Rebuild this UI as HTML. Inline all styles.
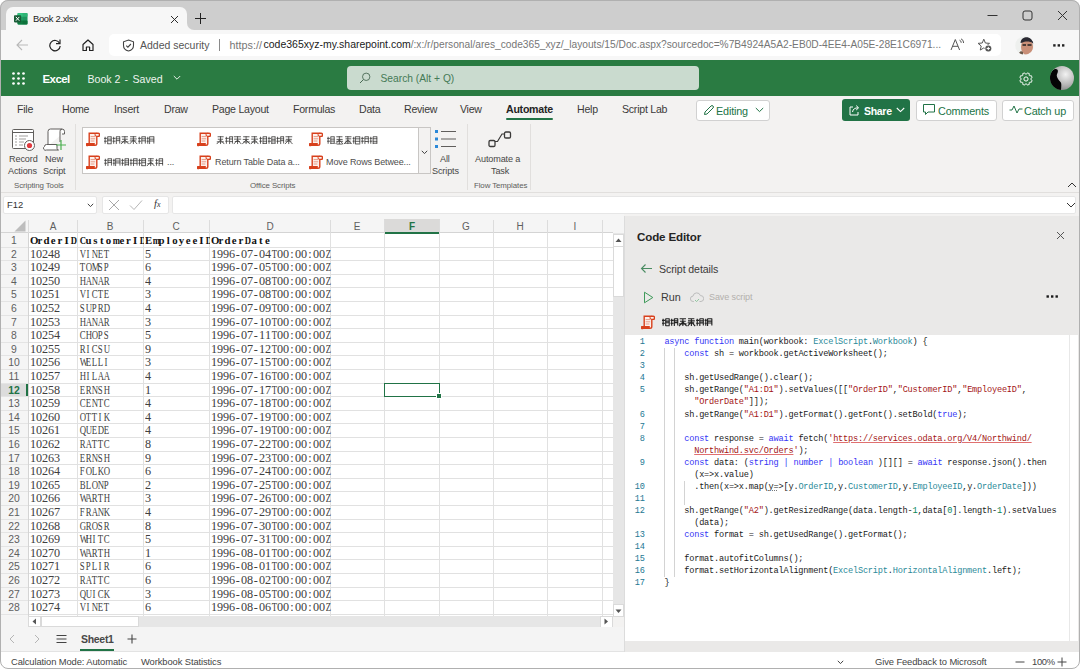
<!DOCTYPE html>
<html><head><meta charset="utf-8">
<style>
*{box-sizing:border-box;margin:0;padding:0}
html,body{width:1080px;height:669px;overflow:hidden;background:#fff}
body{font-family:"Liberation Sans",sans-serif;position:relative;color:#242424}
.a{position:absolute;white-space:nowrap}
#win{position:absolute;left:0;top:0;width:1080px;height:669px;background:#f3f2f1;border-radius:8px;overflow:hidden}
#frame{position:absolute;left:0;top:0;width:1080px;height:669px;border:1px solid #b0b0b0;border-radius:8px;pointer-events:none}
/* tab strip */
#tabs{position:absolute;left:0;top:0;width:1080px;height:31px;background:#cecece}
#tab{position:absolute;left:6px;top:7px;width:181px;height:24px;background:#f7f7f7;border-radius:7px 7px 0 0}
#toolbar{position:absolute;left:0;top:30px;width:1080px;height:31px;background:#f7f7f7}
#addr{position:absolute;left:109px;top:34px;width:892px;height:22px;background:#fff;border-radius:5px}
#green{position:absolute;left:0;top:60px;width:1080px;height:36px;background:#2a7b42}
#search{position:absolute;left:347px;top:66px;width:352px;height:24px;background:#cadbcf;border-radius:4px}
#rtabs{position:absolute;left:0;top:96px;width:1080px;height:27px;background:#f3f2f1}
#rbody{position:absolute;left:0;top:123px;width:1080px;height:70px;background:#f3f2f1;border-bottom:1px solid #e1dfdd}
.rt{font-size:10.6px;letter-spacing:-0.25px;color:#3b3a39;top:103px}
.btn{position:absolute;top:100px;height:21px;border:1px solid #d1d1d1;border-radius:3px;background:#fff}
.rl{font-size:9.1px;color:#484746;letter-spacing:-0.12px}
.gl{font-size:7.9px;color:#605e5c;letter-spacing:-0.1px}
.gi{font-size:9px;color:#4f4e4d;letter-spacing:-0.12px}
.cjk{height:10px;background:repeating-linear-gradient(90deg,#555 0 1px,transparent 1px 2.2px,#555 2.2px 3px,transparent 3px 4.5px,#777 4.5px 5.5px,transparent 5.5px 7px,#666 7px 8px,transparent 8px 9px);opacity:.75}
.ch{font-size:10px;color:#5f5f5f}
.rh{font-size:10.4px;color:#5f5f5f;text-align:center;line-height:13px}
.cc{font-family:"Liberation Serif",serif;font-size:12.2px;line-height:14px;color:#404040}
.cc i,.cb i{display:inline-block;font-style:normal;text-align:center;width:6px}
.cb{font-family:"Liberation Serif",serif;font-size:10.8px;line-height:14px;font-weight:bold;color:#111}
.cb i{width:6.67px}
.cc i.w{transform:scaleX(.72)}
.cb i.w{transform:scaleX(.8)}
.sb{font-size:9.4px;color:#444;letter-spacing:-0.1px}
.ln{font-family:"Liberation Mono",monospace;font-size:8.6px;color:#237893;left:600px;width:45px;text-align:right;line-height:12px}
.cd{font-family:"Liberation Mono",monospace;font-size:8.6px;letter-spacing:-0.195px;color:#1a1a1a;left:664.4px;line-height:12px;white-space:pre}
.k{color:#3535f5}.t{color:#2b8a99}.s{color:#a31515}.n{color:#098658}.h{text-decoration:underline dotted #777;text-underline-offset:1px}.u{color:#a31515;text-decoration:underline;text-decoration-color:#e07070}
</style></head><body>
<div id="win">
 <div id="tabs"></div>
 <div id="tab"></div>
 <div class="a" style="left:187px;top:23px;width:7px;height:8px;background:#f7f7f7"></div>
 <div class="a" style="left:187px;top:22px;width:7px;height:8px;background:#cecece;border-bottom-left-radius:7px"></div>
 <svg class="a" style="left:14px;top:12.5px" width="14" height="12" viewBox="0 0 14 12">
  <rect x="3.5" y="0" width="10" height="11.5" rx="1" fill="#21a366"/>
  <rect x="3.5" y="0" width="10" height="3.8" rx="1" fill="#33c481"/>
  <rect x="3.5" y="7.6" width="10" height="3.9" rx="1" fill="#107c41"/>
  <rect x="8.5" y="0" width="5" height="11.5" fill="#000" opacity=".08"/>
  <rect x="0" y="2.2" width="7.2" height="7.2" rx="0.8" fill="#185c37"/>
  <path d="M1.9 3.9L5.3 7.7M5.3 3.9L1.9 7.7" stroke="#fff" stroke-width="1"/>
 </svg>
 <div class="a" style="left:33px;top:13px;font-size:9.4px;letter-spacing:-0.3px;color:#1b1b1b">Book 2.xlsx</div>
 <svg class="a" style="left:170px;top:15px" width="9" height="9" viewBox="0 0 9 9"><path d="M1 1L8 8M8 1L1 8" stroke="#222" stroke-width="0.95"/></svg>
 <svg class="a" style="left:194px;top:12px" width="12" height="12" viewBox="0 0 12 12"><path d="M6.5 1V12M1 6.5H12" stroke="#222" stroke-width="1"/></svg>
 <svg class="a" style="left:987px;top:14px" width="11" height="3"><path d="M0.5 1.5H10.5" stroke="#333" stroke-width="1"/></svg>
 <svg class="a" style="left:1022px;top:10px" width="11" height="11"><rect x="1" y="1" width="9" height="9" rx="2" fill="none" stroke="#333" stroke-width="1"/></svg>
 <svg class="a" style="left:1057px;top:10px" width="11" height="11"><path d="M1 1L10 10M10 1L1 10" stroke="#333" stroke-width="1"/></svg>

 <div id="toolbar"></div>
 <svg class="a" style="left:15px;top:38px" width="14" height="14" viewBox="0 0 14 14"><path d="M13 7H2M7 2L2 7L7 12" stroke="#b9b9b9" stroke-width="1.1" fill="none"/></svg>
 <svg class="a" style="left:48px;top:38px" width="14" height="14" viewBox="0 0 14 14"><path d="M11.6 5.2A5.2 5.2 0 1 0 12.2 8" stroke="#222" stroke-width="1.2" fill="none"/><path d="M12 1.6V5.6H8" stroke="#222" stroke-width="1.2" fill="none"/></svg>
 <svg class="a" style="left:81px;top:38px" width="14" height="14" viewBox="0 0 14 14"><path d="M2 6.5L7 2L12 6.5V12.5H8.6V9H5.4V12.5H2Z" stroke="#222" stroke-width="1.2" fill="none" stroke-linejoin="round"/></svg>
 <div id="addr"></div>
 <svg class="a" style="left:122px;top:39px" width="13" height="13" viewBox="0 0 13 13"><path d="M6.5 1L11.5 2.8V6.5C11.5 9.3 9.2 11.3 6.5 12C3.8 11.3 1.5 9.3 1.5 6.5V2.8Z" stroke="#444" stroke-width="1.1" fill="none"/><path d="M4.2 6.6L5.9 8.2L8.9 5" stroke="#444" stroke-width="1.1" fill="none"/></svg>
 <div class="a" style="left:140px;top:39px;font-size:10.5px;color:#555">Added security</div>
 <div class="a" style="left:219px;top:39px;width:1px;height:12px;background:#8a8a8a"></div>
 <div class="a" id="u1" style="left:229.5px;top:39px;font-size:10.8px;color:#767676">https://</div>
 <div class="a" id="u2" style="left:263.5px;top:39px;font-size:10.49px;color:#1b1b1b">code365xyz-my.sharepoint.com</div>
 <div class="a" id="u3" style="left:410.7px;top:39px;font-size:10.2px;color:#767676">/:x:/r/personal/ares_code365_xyz/_layouts/15/Doc.aspx?sourcedoc=%7B4924A5A2-EB0D-4EE4-A05E-28E1C6971...</div>
 <svg class="a" style="left:950px;top:38px" width="15" height="13" viewBox="0 0 15 13"><path d="M1 12L5.3 1.5L9.6 12M2.6 8.3H8" stroke="#555" stroke-width="1" fill="none"/><path d="M9.5 2.2A2.5 2.5 0 0 1 11.2 4.8M11 0.8A4.3 4.3 0 0 1 13.6 5" stroke="#555" stroke-width="1" fill="none"/></svg>
 <svg class="a" style="left:977px;top:38px" width="15" height="14" viewBox="0 0 15 14"><path d="M6.80 1.20L8.39 5.02L12.51 5.35L9.37 8.03L10.33 12.05L6.80 9.90L3.27 12.05L4.23 8.03L1.09 5.35L5.21 5.02Z" stroke="#555" stroke-width="1" fill="none" stroke-linejoin="round"/><circle cx="11.3" cy="10.5" r="3.7" fill="#f7f7f7"/><circle cx="11.3" cy="10.5" r="3" fill="#555"/><path d="M11.3 8.9V12.1M9.7 10.5H12.9" stroke="#fff" stroke-width="1"/></svg>
 <svg class="a" style="left:1015px;top:36px" width="19" height="19" viewBox="0 0 19 19"><defs><clipPath id="avc"><circle cx="9.5" cy="9.5" r="9.3"/></clipPath></defs><g clip-path="url(#avc)"><rect width="19" height="19" fill="#eef0ee"/><ellipse cx="12" cy="11" rx="6" ry="8" fill="#c98f78"/><path d="M5.5 7C6 2.5 9 1 12.5 1.2C16 1.4 18.5 4 18.3 8L17.5 7C15 5 10 5 7 6.8Z" fill="#2b2a33"/><path d="M7.5 9H11M12.5 9H16.5" stroke="#222" stroke-width="1.6"/><path d="M4 17C5 15 7 15 8 16L8 19H4Z" fill="#6b5a4a"/></g></svg>
 <svg class="a" style="left:1053px;top:44px" width="12" height="3"><rect x="0.2" y="0.2" width="2.4" height="2.4" fill="#222"/><rect x="4.6" y="0.2" width="2.4" height="2.4" fill="#222"/><rect x="9" y="0.2" width="2.4" height="2.4" fill="#222"/></svg>

 <div id="green"></div>
 <svg class="a" style="left:12px;top:72px" width="13" height="13" viewBox="0 0 13 13" fill="#fff"><circle cx="1.5" cy="1.5" r="1.35"/><circle cx="6.5" cy="1.5" r="1.35"/><circle cx="11.5" cy="1.5" r="1.35"/><circle cx="1.5" cy="6.5" r="1.35"/><circle cx="6.5" cy="6.5" r="1.35"/><circle cx="11.5" cy="6.5" r="1.35"/><circle cx="1.5" cy="11.5" r="1.35"/><circle cx="6.5" cy="11.5" r="1.35"/><circle cx="11.5" cy="11.5" r="1.35"/></svg>
 <div class="a" style="left:42.5px;top:72.5px;font-size:11.4px;letter-spacing:-0.5px;color:#fff;font-weight:bold">Excel</div>
 <div class="a" style="left:87.5px;top:72.5px;font-size:10.6px;color:#eef4ef">Book 2</div><div class="a" style="left:124.5px;top:72.5px;font-size:10.6px;color:#eef4ef">-</div><div class="a" style="left:132.5px;top:72.5px;font-size:10.6px;color:#eef4ef">Saved</div>
 <svg class="a" style="left:173px;top:75px" width="8" height="6"><path d="M0.8 1L4 4.2L7.2 1" stroke="#e6efe8" stroke-width="1" fill="none"/></svg>
 <div id="search"></div>
 <svg class="a" style="left:359px;top:72px" width="12" height="12" viewBox="0 0 12 12"><circle cx="7.2" cy="4.8" r="3.7" stroke="#4a6a55" stroke-width="0.9" fill="none"/><path d="M4.5 7.5L1 11" stroke="#4a6a55" stroke-width="1"/></svg>
 <div class="a" style="left:380.5px;top:73px;font-size:10.25px;color:#457a56">Search (Alt + Q)</div>
 <svg class="a" style="left:1018.5px;top:71.5px" width="14" height="14" viewBox="0 0 14 14"><circle cx="7" cy="7" r="2.1" stroke="#fff" stroke-width="1" fill="none"/><path d="M11.87 7.55L13.14 8.39L12.33 10.36L10.83 10.05L10.05 10.83L10.36 12.33L8.39 13.14L7.55 11.87L6.45 11.87L5.61 13.14L3.64 12.33L3.95 10.83L3.17 10.05L1.67 10.36L0.86 8.39L2.13 7.55L2.13 6.45L0.86 5.61L1.67 3.64L3.17 3.95L3.95 3.17L3.64 1.67L5.61 0.86L6.45 2.13L7.55 2.13L8.39 0.86L10.36 1.67L10.05 3.17L10.83 3.95L12.33 3.64L13.14 5.61L11.87 6.45Z" stroke="#fff" stroke-width="0.9" fill="none" stroke-linejoin="round"/></svg>
 <svg class="a" style="left:1050px;top:66px" width="24" height="24" viewBox="0 0 24 24"><defs><clipPath id="av2"><circle cx="12" cy="12" r="12"/></clipPath><radialGradient id="avg" cx="0.65" cy="0.35" r="0.7"><stop offset="0" stop-color="#f2f2f2"/><stop offset="0.6" stop-color="#b9b9b9"/><stop offset="1" stop-color="#8a8a8a"/></radialGradient></defs><g clip-path="url(#av2)"><rect width="24" height="24" fill="url(#avg)"/><path d="M0 8C2 5 3.5 3.5 5 3C7 2.6 8.3 3.8 7.8 6C7.5 7.5 6.5 8.5 6.8 10C7.2 12 8.5 14 10.5 16C11.5 17 11.5 19 11 24H0Z" fill="#050505"/></g></svg>
 <div id="rtabs"></div>
 <div class="a rt" style="left:17px">File</div>
 <div class="a rt" style="left:62px">Home</div>
 <div class="a rt" style="left:114px">Insert</div>
 <div class="a rt" style="left:164px">Draw</div>
 <div class="a rt" style="left:212px">Page Layout</div>
 <div class="a rt" style="left:293px">Formulas</div>
 <div class="a rt" style="left:359px">Data</div>
 <div class="a rt" style="left:404px">Review</div>
 <div class="a rt" style="left:460px">View</div>
 <div class="a rt" style="left:506px;font-weight:bold;color:#242424">Automate</div>
 <div class="a" style="left:506px;top:117.5px;width:47px;height:2.5px;border-radius:1.5px;background:#217346"></div>
 <div class="a rt" style="left:577px">Help</div>
 <div class="a rt" style="left:622px">Script Lab</div>
 <div class="btn" style="left:696px;width:74px"></div>
 <svg class="a" style="left:703px;top:104px" width="11" height="12" viewBox="0 0 11 12"><path d="M1.5 10.5L2 8L8 2A1.4 1.4 0 0 1 10 4L4 10Z" stroke="#217346" stroke-width="1" fill="none" stroke-linejoin="round"/></svg>
 <div class="a" style="left:716px;top:105px;font-size:10.8px;letter-spacing:-0.15px;color:#217346">Editing</div>
 <svg class="a" style="left:755px;top:107px" width="9" height="6"><path d="M0.8 1L4.5 4.6L8.2 1" stroke="#217346" stroke-width="1" fill="none"/></svg>
 <div class="a" style="left:842px;top:99px;width:68px;height:22px;border-radius:3px;background:#217346"></div>
 <svg class="a" style="left:848px;top:103px" width="13" height="13" viewBox="0 0 13 13"><path d="M5 4H2V12H10V9" stroke="#fff" stroke-width="1" fill="none"/><path d="M4.5 9C5 6 7 4.8 10 4.8M8.2 2.6L10.6 4.8L8.2 7" stroke="#fff" stroke-width="1" fill="none"/></svg>
 <div class="a" style="left:864px;top:105px;font-size:10.5px;letter-spacing:-0.3px;font-weight:bold;color:#fff">Share</div>
 <svg class="a" style="left:896px;top:107px" width="9" height="6"><path d="M0.8 1L4.5 4.6L8.2 1" stroke="#fff" stroke-width="1.1" fill="none"/></svg>
 <div class="btn" style="left:916px;width:81px"></div>
 <svg class="a" style="left:922px;top:103px" width="14" height="13" viewBox="0 0 14 13"><path d="M1.5 1.5H12.5V9H6L3.5 11.5V9H1.5Z" stroke="#217346" stroke-width="1" fill="none" stroke-linejoin="round"/></svg>
 <div class="a" style="left:938px;top:105px;font-size:10.8px;letter-spacing:-0.15px;color:#217346">Comments</div>
 <div class="btn" style="left:1002px;width:72px"></div>
 <svg class="a" style="left:1009px;top:104px" width="14" height="11" viewBox="0 0 14 11"><path d="M0.5 6H3L5 2L8 9L10 5H13.5" stroke="#217346" stroke-width="1" fill="none"/></svg>
 <div class="a" style="left:1024px;top:105px;font-size:10.8px;letter-spacing:-0.15px;color:#217346">Catch up</div>
 <div id="rbody"></div>
 <svg class="a" style="left:11px;top:128px" width="24" height="23" viewBox="0 0 24 23">
  <rect x="1.5" y="1.5" width="21" height="19" rx="1" fill="#fff" stroke="#605e5c" stroke-width="1"/>
  <path d="M1.5 4.5H22.5" stroke="#605e5c" stroke-width="1"/>
  <path d="M4 8H6M8 8H17M4 11H6M8 11H15M4 14H6M8 14H13M4 17H6M8 17H12" stroke="#a19f9d" stroke-width="1"/>
  <circle cx="18.5" cy="17.5" r="5" fill="#fff" stroke="#605e5c" stroke-width="1"/>
  <circle cx="18.5" cy="17.5" r="2.6" fill="#e03a3e"/>
 </svg>
 <div class="a rl" style="left:9px;top:154px">Record</div>
 <div class="a rl" style="left:8px;top:166px">Actions</div>
 <svg class="a" style="left:43px;top:128px" width="25" height="23" viewBox="0 0 25 23">
  <path d="M5 18V3.5A2.5 2.5 0 0 1 7.5 1H19A2.5 2.5 0 0 1 21.5 3.5V6H19M19 1.2A2 2 0 0 0 17 3.5V14" fill="#fff" stroke="#605e5c" stroke-width="1"/>
  <path d="M1.5 18.5A2 2 0 0 1 3.5 16.5H14V20.5A1.5 1.5 0 0 0 15.5 22H3.5A2 2 0 0 1 1.5 18.5Z" fill="#fff" stroke="#605e5c" stroke-width="1"/>
  <path d="M18 12V22M13 17H23" stroke="#4caf50" stroke-width="1.2"/>
 </svg>
 <div class="a rl" style="left:45px;top:154px">New</div>
 <div class="a rl" style="left:43px;top:166px">Script</div>
 <div class="a gl" style="left:14px;top:181px">Scripting Tools</div>
 <div class="a" style="left:75px;top:124px;width:1px;height:66px;background:#e1dfdd"></div>

 <div class="a" style="left:82px;top:127px;width:349px;height:47px;background:#fff;border:1px solid #c8c6c4"></div>
 <div class="a" style="left:418px;top:128px;width:12px;height:45px;background:#f3f2f1;border-left:1px solid #c8c6c4"></div>
 <svg class="a" style="left:421px;top:150px" width="7" height="5"><path d="M0.8 0.8L3.5 3.6L6.2 0.8" stroke="#444" stroke-width="1" fill="none"/></svg>
 <svg width="0" height="0" style="position:absolute"><defs>
  <g id="scr"><path d="M3.2 1.2H12A1.6 1.6 0 0 1 12 4.4H10.8V11.6A1.8 1.8 0 0 1 9 13.4H3.2Z" fill="#fdf1ec" stroke="#d8401c" stroke-width="1.4"/><path d="M10.6 1.2A1.6 1.6 0 0 0 10.6 4.4" fill="none" stroke="#d8401c" stroke-width="1"/><path d="M0.6 11H8.8V14H2.4A1.8 1.5 0 0 1 0.6 11Z" fill="#d8401c"/><path d="M4.6 4.6H9.2M4.6 6.8H9.2M4.6 9H8.4" stroke="#e79a86" stroke-width="1"/></g>
 </defs></svg>
 <svg class="a" style="left:86px;top:132px" width="14" height="15"><use href="#scr"/></svg>
 <svg class="a" style="left:86px;top:155px" width="14" height="15"><use href="#scr"/></svg>
 <svg class="a" style="left:197px;top:132px" width="14" height="15"><use href="#scr"/></svg>
 <svg class="a" style="left:197px;top:155px" width="14" height="15"><use href="#scr"/></svg>
 <svg class="a" style="left:309px;top:132px" width="14" height="15"><use href="#scr"/></svg>
 <svg class="a" style="left:309px;top:155px" width="14" height="15"><use href="#scr"/></svg>
<svg class="a" style="left:102px;top:135.5px" width="55" height="9" viewBox="0 0 55.0 9.5"><path d="M1.8 0.8V8.2M0.6 2.5H3.7M0.6 5.5H3.7M4.3 0.8H8.6M4.3 3.3H8.6M4.3 5.0H8.6M4.3 8.2H8.6M4.5 0.8V8.5M8.2 0.8V8.0M10.8 0.8V8.2M9.6 2.5H12.8M9.6 5.5H12.8M13.4 0.8H17.6M13.4 3.0H17.6M13.4 4.9H17.6M13.6 0.8V8.5M17.2 0.8V8.0M19.2 0.8H25.9M19.6 3.4H25.7M18.7 6.2H26.5M22.6 0.3V8.5M22.6 4.2L18.6 8.5M22.6 4.2L26.6 8.5M28.1 0.8H34.7M28.0 3.1H35.2M27.7 5.2H34.6M31.6 0.3V8.5M31.6 4.2L27.6 8.5M31.6 4.2L35.6 8.5M37.8 0.8V8.2M36.6 2.5H39.7M36.6 5.5H39.7M40.3 0.8H44.6M40.3 3.0H44.6M40.3 5.1H44.6M40.5 0.8V8.5M44.2 0.8V8.0M46.8 0.8V8.2M45.6 2.5H47.9M45.6 5.5H47.9M48.5 0.8H53.6M48.5 3.3H53.6M48.5 5.3H53.6M48.7 0.8V8.5M53.2 0.8V8.0" stroke="#3a3938" stroke-width="0.85" fill="none"/></svg>
<svg class="a" style="left:213.5px;top:135.5px" width="82" height="9" viewBox="0 0 82.0 9.5"><path d="M1.5 0.8H7.9M1.7 3.4H7.3M0.7 6.2H8.2M4.6 0.3V8.5M4.6 4.2L0.6 8.5M4.6 4.2L8.6 8.5M10.8 0.8V8.2M9.6 2.5H13.4M9.6 5.5H13.4M14.0 0.8H17.6M14.0 3.2H17.6M14.0 5.9H17.6M14.2 0.8V8.5M17.2 0.8V8.0M18.6 0.8H26.2M18.9 3.3H26.4M19.7 5.8H25.1M22.6 0.3V8.5M22.6 4.2L18.6 8.5M22.6 4.2L26.6 8.5M28.5 0.8H35.2M28.1 3.6H34.4M28.6 6.3H35.4M31.6 0.3V8.5M31.6 4.2L27.6 8.5M31.6 4.2L35.6 8.5M37.1 0.8H43.2M37.0 3.3H44.2M37.2 6.3H43.2M40.6 0.3V8.5M40.6 4.2L36.6 8.5M40.6 4.2L44.6 8.5M46.8 0.8V8.2M45.6 2.5H48.7M45.6 5.5H48.7M49.3 0.8H53.6M49.3 3.0H53.6M49.3 5.5H53.6M49.3 7.8H53.6M49.5 0.8V8.5M53.2 0.8V8.0M55.8 0.8V8.2M54.6 2.5H57.9M54.6 5.5H57.9M58.5 0.8H62.6M58.5 3.4H62.6M58.5 5.2H62.6M58.5 7.6H62.6M58.7 0.8V8.5M62.2 0.8V8.0M64.8 0.8V8.2M63.6 2.5H67.3M63.6 5.5H67.3M67.9 0.8H71.6M67.9 3.0H71.6M67.9 4.9H71.6M68.1 0.8V8.5M71.2 0.8V8.0M73.2 0.8H80.3M73.5 3.5H79.9M72.8 5.3H79.4M76.6 0.3V8.5M76.6 4.2L72.6 8.5M76.6 4.2L80.6 8.5" stroke="#3a3938" stroke-width="0.85" fill="none"/></svg>
<svg class="a" style="left:324.5px;top:135.5px" width="55" height="9" viewBox="0 0 55.0 9.5"><path d="M1.8 0.8V8.2M0.6 2.5H3.8M0.6 5.5H3.8M4.4 0.8H8.6M4.4 3.3H8.6M4.4 5.4H8.6M4.4 7.7H8.6M4.6 0.8V8.5M8.2 0.8V8.0M10.4 0.8H16.9M10.6 3.6H17.1M10.3 5.6H17.5M10.7 8.5H17.0M13.6 0.3V8.5M13.6 4.2L9.6 8.5M13.6 4.2L17.6 8.5M19.6 0.8H26.4M20.1 3.0H26.2M19.9 5.5H25.5M19.1 7.6H26.2M22.6 0.3V8.5M22.6 4.2L18.6 8.5M22.6 4.2L26.6 8.5M28.8 0.8V8.2M27.6 2.5H29.8M27.6 5.5H29.8M30.4 0.8H35.6M30.4 3.0H35.6M30.4 5.6H35.6M30.4 8.4H35.6M30.6 0.8V8.5M35.2 0.8V8.0M37.8 0.8V8.2M36.6 2.5H39.8M36.6 5.5H39.8M40.4 0.8H44.6M40.4 2.9H44.6M40.4 5.8H44.6M40.6 0.8V8.5M44.2 0.8V8.0M46.8 0.8V8.2M45.6 2.5H48.5M45.6 5.5H48.5M49.1 0.8H53.6M49.1 2.9H53.6M49.1 5.6H53.6M49.1 7.6H53.6M49.3 0.8V8.5M53.2 0.8V8.0" stroke="#3a3938" stroke-width="0.85" fill="none"/></svg>
<svg class="a" style="left:102px;top:157.5px" width="64" height="9" viewBox="0 0 64.0 9.5"><path d="M1.8 0.8V8.2M0.6 2.5H3.7M0.6 5.5H3.7M4.3 0.8H8.6M4.3 2.9H8.6M4.3 4.8H8.6M4.5 0.8V8.5M8.2 0.8V8.0M10.8 0.8V8.2M9.6 2.5H11.8M9.6 5.5H11.8M12.4 0.8H17.6M12.4 3.2H17.6M12.4 5.2H17.6M12.6 0.8V8.5M17.2 0.8V8.0M19.8 0.8V8.2M18.6 2.5H21.7M18.6 5.5H21.7M22.3 0.8H26.6M22.3 3.0H26.6M22.3 5.1H26.6M22.3 7.1H26.6M22.5 0.8V8.5M26.2 0.8V8.0M28.8 0.8V8.2M27.6 2.5H30.7M27.6 5.5H30.7M31.3 0.8H35.6M31.3 2.9H35.6M31.3 5.6H35.6M31.5 0.8V8.5M35.2 0.8V8.0M37.8 0.8V8.2M36.6 2.5H39.4M36.6 5.5H39.4M40.0 0.8H44.6M40.0 2.9H44.6M40.0 5.0H44.6M40.0 8.1H44.6M40.2 0.8V8.5M44.2 0.8V8.0M46.8 0.8H52.9M46.7 3.0H52.5M46.1 6.0H52.4M49.6 0.3V8.5M49.6 4.2L45.6 8.5M49.6 4.2L53.6 8.5M55.8 0.8V8.2M54.6 2.5H57.7M54.6 5.5H57.7M58.3 0.8H62.6M58.3 3.1H62.6M58.3 5.8H62.6M58.5 0.8V8.5M62.2 0.8V8.0" stroke="#3a3938" stroke-width="0.85" fill="none"/></svg>
 <div class="a gi" style="left:167px;top:157px">...</div>
 <div class="a gi" style="left:215px;top:157px">Return Table Data a...</div>
 <div class="a gi" style="left:326px;top:157px">Move Rows Betwee...</div>

 <svg class="a" style="left:434px;top:129px" width="24" height="20" viewBox="0 0 24 20">
  <rect x="1" y="1" width="3" height="3" fill="#2b88d8"/><rect x="1" y="8.5" width="3" height="3" fill="#2b88d8"/><rect x="1" y="16" width="3" height="3" fill="#2b88d8"/>
  <path d="M7 2.5H22M7 10H22M7 17.5H22" stroke="#605e5c" stroke-width="1"/>
 </svg>
 <div class="a rl" style="left:440px;top:154px">All</div>
 <div class="a rl" style="left:432px;top:166px">Scripts</div>
 <div class="a gl" style="left:250px;top:181px">Office Scripts</div>
 <div class="a" style="left:467px;top:124px;width:1px;height:66px;background:#e1dfdd"></div>
 <svg class="a" style="left:487px;top:130px" width="25" height="19" viewBox="0 0 25 19">
  <rect x="2" y="10.5" width="6" height="6" rx="1.3" fill="none" stroke="#3b3a39" stroke-width="1.3"/>
  <rect x="17.5" y="2" width="6" height="6" rx="1.3" fill="none" stroke="#3b3a39" stroke-width="1.3"/>
  <path d="M8 11.5L10.5 11.5L15 4L17.5 4" stroke="#3b3a39" stroke-width="1.2" fill="none"/>
 </svg>
 <div class="a rl" style="left:475px;top:154px">Automate a</div>
 <div class="a rl" style="left:491px;top:166px">Task</div>
 <div class="a gl" style="left:474px;top:181px">Flow Templates</div>
 <div class="a" style="left:530px;top:124px;width:1px;height:66px;background:#e1dfdd"></div>
 <svg class="a" style="left:1067px;top:182px" width="10" height="6"><path d="M1 5L5 1L9 5" stroke="#333" stroke-width="1" fill="none"/></svg>
<!--GRID-->
<div class="a" style="left:0;top:213px;width:624px;height:20px;background:#f5f5f5"></div><div class="a" style="left:0;top:232px;width:613px;height:1px;background:#d4d4d4"></div>
<div class="a" style="left:0;top:233px;width:28px;height:383px;background:#f5f5f5"></div>
<div class="a" style="left:28px;top:233px;width:585px;height:383px;background:#fff"></div>
<div class="a" style="left:384px;top:219px;width:56px;height:15px;background:#dbdad9;border-bottom:2px solid #217346"></div>
<div class="a" style="left:0;top:383px;width:28px;height:13px;background:#dcdcdc;border-right:2px solid #217346"></div>
<svg class="a" style="left:14px;top:220px" width="12" height="12"><path d="M11.5 0.5V11.5H0.5Z" fill="#bdbdbd"/></svg>
<div class="a" style="left:28px;top:220px;width:1px;height:13px;background:#dcdcdc"></div>
<div class="a" style="left:77px;top:220px;width:1px;height:13px;background:#dcdcdc"></div>
<div class="a" style="left:143px;top:220px;width:1px;height:13px;background:#dcdcdc"></div>
<div class="a" style="left:209px;top:220px;width:1px;height:13px;background:#dcdcdc"></div>
<div class="a" style="left:330px;top:220px;width:1px;height:13px;background:#dcdcdc"></div>
<div class="a" style="left:384px;top:220px;width:1px;height:13px;background:#dcdcdc"></div>
<div class="a" style="left:439px;top:220px;width:1px;height:13px;background:#dcdcdc"></div>
<div class="a" style="left:493px;top:220px;width:1px;height:13px;background:#dcdcdc"></div>
<div class="a" style="left:547px;top:220px;width:1px;height:13px;background:#dcdcdc"></div>
<div class="a" style="left:602px;top:220px;width:1px;height:13px;background:#dcdcdc"></div>
<div class="a" style="left:77px;top:233px;width:1px;height:383px;background:#e1e1e1"></div>
<div class="a" style="left:143px;top:233px;width:1px;height:383px;background:#e1e1e1"></div>
<div class="a" style="left:209px;top:233px;width:1px;height:383px;background:#e1e1e1"></div>
<div class="a" style="left:330px;top:233px;width:1px;height:383px;background:#e1e1e1"></div>
<div class="a" style="left:384px;top:233px;width:1px;height:383px;background:#e1e1e1"></div>
<div class="a" style="left:439px;top:233px;width:1px;height:383px;background:#e1e1e1"></div>
<div class="a" style="left:493px;top:233px;width:1px;height:383px;background:#e1e1e1"></div>
<div class="a" style="left:547px;top:233px;width:1px;height:383px;background:#e1e1e1"></div>
<div class="a" style="left:602px;top:233px;width:1px;height:383px;background:#e1e1e1"></div>
<div class="a" style="left:28px;top:233px;width:1px;height:383px;background:#d4d4d4"></div>
<div class="a" style="left:0;top:247px;width:28px;height:1px;background:#e4e4e4"></div>
<div class="a" style="left:29px;top:247px;width:584px;height:1px;background:#e1e1e1"></div>
<div class="a" style="left:0;top:260px;width:28px;height:1px;background:#e4e4e4"></div>
<div class="a" style="left:29px;top:260px;width:584px;height:1px;background:#e1e1e1"></div>
<div class="a" style="left:0;top:274px;width:28px;height:1px;background:#e4e4e4"></div>
<div class="a" style="left:29px;top:274px;width:584px;height:1px;background:#e1e1e1"></div>
<div class="a" style="left:0;top:287px;width:28px;height:1px;background:#e4e4e4"></div>
<div class="a" style="left:29px;top:287px;width:584px;height:1px;background:#e1e1e1"></div>
<div class="a" style="left:0;top:301px;width:28px;height:1px;background:#e4e4e4"></div>
<div class="a" style="left:29px;top:301px;width:584px;height:1px;background:#e1e1e1"></div>
<div class="a" style="left:0;top:315px;width:28px;height:1px;background:#e4e4e4"></div>
<div class="a" style="left:29px;top:315px;width:584px;height:1px;background:#e1e1e1"></div>
<div class="a" style="left:0;top:328px;width:28px;height:1px;background:#e4e4e4"></div>
<div class="a" style="left:29px;top:328px;width:584px;height:1px;background:#e1e1e1"></div>
<div class="a" style="left:0;top:342px;width:28px;height:1px;background:#e4e4e4"></div>
<div class="a" style="left:29px;top:342px;width:584px;height:1px;background:#e1e1e1"></div>
<div class="a" style="left:0;top:355px;width:28px;height:1px;background:#e4e4e4"></div>
<div class="a" style="left:29px;top:355px;width:584px;height:1px;background:#e1e1e1"></div>
<div class="a" style="left:0;top:369px;width:28px;height:1px;background:#e4e4e4"></div>
<div class="a" style="left:29px;top:369px;width:584px;height:1px;background:#e1e1e1"></div>
<div class="a" style="left:0;top:383px;width:28px;height:1px;background:#e4e4e4"></div>
<div class="a" style="left:29px;top:383px;width:584px;height:1px;background:#e1e1e1"></div>
<div class="a" style="left:0;top:396px;width:28px;height:1px;background:#e4e4e4"></div>
<div class="a" style="left:29px;top:396px;width:584px;height:1px;background:#e1e1e1"></div>
<div class="a" style="left:0;top:410px;width:28px;height:1px;background:#e4e4e4"></div>
<div class="a" style="left:29px;top:410px;width:584px;height:1px;background:#e1e1e1"></div>
<div class="a" style="left:0;top:423px;width:28px;height:1px;background:#e4e4e4"></div>
<div class="a" style="left:29px;top:423px;width:584px;height:1px;background:#e1e1e1"></div>
<div class="a" style="left:0;top:437px;width:28px;height:1px;background:#e4e4e4"></div>
<div class="a" style="left:29px;top:437px;width:584px;height:1px;background:#e1e1e1"></div>
<div class="a" style="left:0;top:451px;width:28px;height:1px;background:#e4e4e4"></div>
<div class="a" style="left:29px;top:451px;width:584px;height:1px;background:#e1e1e1"></div>
<div class="a" style="left:0;top:464px;width:28px;height:1px;background:#e4e4e4"></div>
<div class="a" style="left:29px;top:464px;width:584px;height:1px;background:#e1e1e1"></div>
<div class="a" style="left:0;top:478px;width:28px;height:1px;background:#e4e4e4"></div>
<div class="a" style="left:29px;top:478px;width:584px;height:1px;background:#e1e1e1"></div>
<div class="a" style="left:0;top:491px;width:28px;height:1px;background:#e4e4e4"></div>
<div class="a" style="left:29px;top:491px;width:584px;height:1px;background:#e1e1e1"></div>
<div class="a" style="left:0;top:505px;width:28px;height:1px;background:#e4e4e4"></div>
<div class="a" style="left:29px;top:505px;width:584px;height:1px;background:#e1e1e1"></div>
<div class="a" style="left:0;top:519px;width:28px;height:1px;background:#e4e4e4"></div>
<div class="a" style="left:29px;top:519px;width:584px;height:1px;background:#e1e1e1"></div>
<div class="a" style="left:0;top:532px;width:28px;height:1px;background:#e4e4e4"></div>
<div class="a" style="left:29px;top:532px;width:584px;height:1px;background:#e1e1e1"></div>
<div class="a" style="left:0;top:546px;width:28px;height:1px;background:#e4e4e4"></div>
<div class="a" style="left:29px;top:546px;width:584px;height:1px;background:#e1e1e1"></div>
<div class="a" style="left:0;top:559px;width:28px;height:1px;background:#e4e4e4"></div>
<div class="a" style="left:29px;top:559px;width:584px;height:1px;background:#e1e1e1"></div>
<div class="a" style="left:0;top:573px;width:28px;height:1px;background:#e4e4e4"></div>
<div class="a" style="left:29px;top:573px;width:584px;height:1px;background:#e1e1e1"></div>
<div class="a" style="left:0;top:587px;width:28px;height:1px;background:#e4e4e4"></div>
<div class="a" style="left:29px;top:587px;width:584px;height:1px;background:#e1e1e1"></div>
<div class="a" style="left:0;top:600px;width:28px;height:1px;background:#e4e4e4"></div>
<div class="a" style="left:29px;top:600px;width:584px;height:1px;background:#e1e1e1"></div>
<div class="a" style="left:0;top:614px;width:28px;height:1px;background:#e4e4e4"></div>
<div class="a" style="left:29px;top:614px;width:584px;height:1px;background:#e1e1e1"></div>
<div class="a ch" style="left:53px;top:221px;width:40px;margin-left:-20px;text-align:center">A</div>
<div class="a ch" style="left:110px;top:221px;width:40px;margin-left:-20px;text-align:center">B</div>
<div class="a ch" style="left:176px;top:221px;width:40px;margin-left:-20px;text-align:center">C</div>
<div class="a ch" style="left:270px;top:221px;width:40px;margin-left:-20px;text-align:center">D</div>
<div class="a ch" style="left:357px;top:221px;width:40px;margin-left:-20px;text-align:center">E</div>
<div class="a ch" style="left:412px;top:221px;width:40px;margin-left:-20px;text-align:center;color:#217346;font-weight:bold">F</div>
<div class="a ch" style="left:466px;top:221px;width:40px;margin-left:-20px;text-align:center">G</div>
<div class="a ch" style="left:520px;top:221px;width:40px;margin-left:-20px;text-align:center">H</div>
<div class="a ch" style="left:575px;top:221px;width:40px;margin-left:-20px;text-align:center">I</div>
<div class="a rh" style="left:0;top:234px;width:28px">1</div>
<div class="a rh" style="left:0;top:248px;width:28px">2</div>
<div class="a rh" style="left:0;top:261px;width:28px">3</div>
<div class="a rh" style="left:0;top:275px;width:28px">4</div>
<div class="a rh" style="left:0;top:288px;width:28px">5</div>
<div class="a rh" style="left:0;top:302px;width:28px">6</div>
<div class="a rh" style="left:0;top:316px;width:28px">7</div>
<div class="a rh" style="left:0;top:329px;width:28px">8</div>
<div class="a rh" style="left:0;top:343px;width:28px">9</div>
<div class="a rh" style="left:0;top:356px;width:28px">10</div>
<div class="a rh" style="left:0;top:370px;width:28px">11</div>
<div class="a rh" style="left:0;top:384px;width:28px;color:#217346;font-weight:bold">12</div>
<div class="a rh" style="left:0;top:397px;width:28px">13</div>
<div class="a rh" style="left:0;top:411px;width:28px">14</div>
<div class="a rh" style="left:0;top:424px;width:28px">15</div>
<div class="a rh" style="left:0;top:438px;width:28px">16</div>
<div class="a rh" style="left:0;top:452px;width:28px">17</div>
<div class="a rh" style="left:0;top:465px;width:28px">18</div>
<div class="a rh" style="left:0;top:479px;width:28px">19</div>
<div class="a rh" style="left:0;top:492px;width:28px">20</div>
<div class="a rh" style="left:0;top:506px;width:28px">21</div>
<div class="a rh" style="left:0;top:520px;width:28px">22</div>
<div class="a rh" style="left:0;top:533px;width:28px">23</div>
<div class="a rh" style="left:0;top:547px;width:28px">24</div>
<div class="a rh" style="left:0;top:560px;width:28px">25</div>
<div class="a rh" style="left:0;top:574px;width:28px">26</div>
<div class="a rh" style="left:0;top:588px;width:28px">27</div>
<div class="a rh" style="left:0;top:601px;width:28px">28</div>
<div class="a cb" style="left:29.9px;top:233px;width:47.7px;overflow:hidden"><i>O</i><i>r</i><i>d</i><i>e</i><i>r</i><i>I</i><i class=w>D</i></div>
<div class="a cb" style="left:78.6px;top:233px;width:65.3px;overflow:hidden"><i class=w>C</i><i>u</i><i>s</i><i>t</i><i>o</i><i class=w>m</i><i>e</i><i>r</i><i>I</i><i class=w>D</i></div>
<div class="a cb" style="left:144.9px;top:233px;width:65.0px;overflow:hidden"><i>E</i><i class=w>m</i><i>p</i><i>l</i><i>o</i><i>y</i><i>e</i><i>e</i><i>I</i><i class=w>D</i></div>
<div class="a cb" style="left:210.9px;top:233px;width:120.0px;overflow:hidden"><i>O</i><i>r</i><i>d</i><i>e</i><i>r</i><i class=w>D</i><i>a</i><i>t</i><i>e</i></div>
<div class="a cc" style="left:29.9px;top:247px;width:47.7px;overflow:hidden"><i>1</i><i>0</i><i>2</i><i>4</i><i>8</i></div>
<div class="a cc" style="left:78.6px;top:247px;width:65.3px;overflow:hidden"><i class=w>V</i><i class=w>I</i><i class=w>N</i><i class=w>E</i><i class=w>T</i></div>
<div class="a cc" style="left:144.9px;top:247px;width:65.0px;overflow:hidden"><i>5</i></div>
<div class="a cc" style="left:210.9px;top:247px"><i>1</i><i>9</i><i>9</i><i>6</i><i>-</i><i>0</i><i>7</i><i>-</i><i>0</i><i>4</i><i class=w>T</i><i>0</i><i>0</i><i>:</i><i>0</i><i>0</i><i>:</i><i>0</i><i>0</i><i class=w>Z</i></div>
<div class="a cc" style="left:29.9px;top:260px;width:47.7px;overflow:hidden"><i>1</i><i>0</i><i>2</i><i>4</i><i>9</i></div>
<div class="a cc" style="left:78.6px;top:260px;width:65.3px;overflow:hidden"><i class=w>T</i><i class=w>O</i><i class=w>M</i><i class=w>S</i><i class=w>P</i></div>
<div class="a cc" style="left:144.9px;top:260px;width:65.0px;overflow:hidden"><i>6</i></div>
<div class="a cc" style="left:210.9px;top:260px"><i>1</i><i>9</i><i>9</i><i>6</i><i>-</i><i>0</i><i>7</i><i>-</i><i>0</i><i>5</i><i class=w>T</i><i>0</i><i>0</i><i>:</i><i>0</i><i>0</i><i>:</i><i>0</i><i>0</i><i class=w>Z</i></div>
<div class="a cc" style="left:29.9px;top:274px;width:47.7px;overflow:hidden"><i>1</i><i>0</i><i>2</i><i>5</i><i>0</i></div>
<div class="a cc" style="left:78.6px;top:274px;width:65.3px;overflow:hidden"><i class=w>H</i><i class=w>A</i><i class=w>N</i><i class=w>A</i><i class=w>R</i></div>
<div class="a cc" style="left:144.9px;top:274px;width:65.0px;overflow:hidden"><i>4</i></div>
<div class="a cc" style="left:210.9px;top:274px"><i>1</i><i>9</i><i>9</i><i>6</i><i>-</i><i>0</i><i>7</i><i>-</i><i>0</i><i>8</i><i class=w>T</i><i>0</i><i>0</i><i>:</i><i>0</i><i>0</i><i>:</i><i>0</i><i>0</i><i class=w>Z</i></div>
<div class="a cc" style="left:29.9px;top:287px;width:47.7px;overflow:hidden"><i>1</i><i>0</i><i>2</i><i>5</i><i>1</i></div>
<div class="a cc" style="left:78.6px;top:287px;width:65.3px;overflow:hidden"><i class=w>V</i><i class=w>I</i><i class=w>C</i><i class=w>T</i><i class=w>E</i></div>
<div class="a cc" style="left:144.9px;top:287px;width:65.0px;overflow:hidden"><i>3</i></div>
<div class="a cc" style="left:210.9px;top:287px"><i>1</i><i>9</i><i>9</i><i>6</i><i>-</i><i>0</i><i>7</i><i>-</i><i>0</i><i>8</i><i class=w>T</i><i>0</i><i>0</i><i>:</i><i>0</i><i>0</i><i>:</i><i>0</i><i>0</i><i class=w>Z</i></div>
<div class="a cc" style="left:29.9px;top:301px;width:47.7px;overflow:hidden"><i>1</i><i>0</i><i>2</i><i>5</i><i>2</i></div>
<div class="a cc" style="left:78.6px;top:301px;width:65.3px;overflow:hidden"><i class=w>S</i><i class=w>U</i><i class=w>P</i><i class=w>R</i><i class=w>D</i></div>
<div class="a cc" style="left:144.9px;top:301px;width:65.0px;overflow:hidden"><i>4</i></div>
<div class="a cc" style="left:210.9px;top:301px"><i>1</i><i>9</i><i>9</i><i>6</i><i>-</i><i>0</i><i>7</i><i>-</i><i>0</i><i>9</i><i class=w>T</i><i>0</i><i>0</i><i>:</i><i>0</i><i>0</i><i>:</i><i>0</i><i>0</i><i class=w>Z</i></div>
<div class="a cc" style="left:29.9px;top:315px;width:47.7px;overflow:hidden"><i>1</i><i>0</i><i>2</i><i>5</i><i>3</i></div>
<div class="a cc" style="left:78.6px;top:315px;width:65.3px;overflow:hidden"><i class=w>H</i><i class=w>A</i><i class=w>N</i><i class=w>A</i><i class=w>R</i></div>
<div class="a cc" style="left:144.9px;top:315px;width:65.0px;overflow:hidden"><i>3</i></div>
<div class="a cc" style="left:210.9px;top:315px"><i>1</i><i>9</i><i>9</i><i>6</i><i>-</i><i>0</i><i>7</i><i>-</i><i>1</i><i>0</i><i class=w>T</i><i>0</i><i>0</i><i>:</i><i>0</i><i>0</i><i>:</i><i>0</i><i>0</i><i class=w>Z</i></div>
<div class="a cc" style="left:29.9px;top:328px;width:47.7px;overflow:hidden"><i>1</i><i>0</i><i>2</i><i>5</i><i>4</i></div>
<div class="a cc" style="left:78.6px;top:328px;width:65.3px;overflow:hidden"><i class=w>C</i><i class=w>H</i><i class=w>O</i><i class=w>P</i><i class=w>S</i></div>
<div class="a cc" style="left:144.9px;top:328px;width:65.0px;overflow:hidden"><i>5</i></div>
<div class="a cc" style="left:210.9px;top:328px"><i>1</i><i>9</i><i>9</i><i>6</i><i>-</i><i>0</i><i>7</i><i>-</i><i>1</i><i>1</i><i class=w>T</i><i>0</i><i>0</i><i>:</i><i>0</i><i>0</i><i>:</i><i>0</i><i>0</i><i class=w>Z</i></div>
<div class="a cc" style="left:29.9px;top:342px;width:47.7px;overflow:hidden"><i>1</i><i>0</i><i>2</i><i>5</i><i>5</i></div>
<div class="a cc" style="left:78.6px;top:342px;width:65.3px;overflow:hidden"><i class=w>R</i><i class=w>I</i><i class=w>C</i><i class=w>S</i><i class=w>U</i></div>
<div class="a cc" style="left:144.9px;top:342px;width:65.0px;overflow:hidden"><i>9</i></div>
<div class="a cc" style="left:210.9px;top:342px"><i>1</i><i>9</i><i>9</i><i>6</i><i>-</i><i>0</i><i>7</i><i>-</i><i>1</i><i>2</i><i class=w>T</i><i>0</i><i>0</i><i>:</i><i>0</i><i>0</i><i>:</i><i>0</i><i>0</i><i class=w>Z</i></div>
<div class="a cc" style="left:29.9px;top:355px;width:47.7px;overflow:hidden"><i>1</i><i>0</i><i>2</i><i>5</i><i>6</i></div>
<div class="a cc" style="left:78.6px;top:355px;width:65.3px;overflow:hidden"><i class=w>W</i><i class=w>E</i><i class=w>L</i><i class=w>L</i><i class=w>I</i></div>
<div class="a cc" style="left:144.9px;top:355px;width:65.0px;overflow:hidden"><i>3</i></div>
<div class="a cc" style="left:210.9px;top:355px"><i>1</i><i>9</i><i>9</i><i>6</i><i>-</i><i>0</i><i>7</i><i>-</i><i>1</i><i>5</i><i class=w>T</i><i>0</i><i>0</i><i>:</i><i>0</i><i>0</i><i>:</i><i>0</i><i>0</i><i class=w>Z</i></div>
<div class="a cc" style="left:29.9px;top:369px;width:47.7px;overflow:hidden"><i>1</i><i>0</i><i>2</i><i>5</i><i>7</i></div>
<div class="a cc" style="left:78.6px;top:369px;width:65.3px;overflow:hidden"><i class=w>H</i><i class=w>I</i><i class=w>L</i><i class=w>A</i><i class=w>A</i></div>
<div class="a cc" style="left:144.9px;top:369px;width:65.0px;overflow:hidden"><i>4</i></div>
<div class="a cc" style="left:210.9px;top:369px"><i>1</i><i>9</i><i>9</i><i>6</i><i>-</i><i>0</i><i>7</i><i>-</i><i>1</i><i>6</i><i class=w>T</i><i>0</i><i>0</i><i>:</i><i>0</i><i>0</i><i>:</i><i>0</i><i>0</i><i class=w>Z</i></div>
<div class="a cc" style="left:29.9px;top:383px;width:47.7px;overflow:hidden"><i>1</i><i>0</i><i>2</i><i>5</i><i>8</i></div>
<div class="a cc" style="left:78.6px;top:383px;width:65.3px;overflow:hidden"><i class=w>E</i><i class=w>R</i><i class=w>N</i><i class=w>S</i><i class=w>H</i></div>
<div class="a cc" style="left:144.9px;top:383px;width:65.0px;overflow:hidden"><i>1</i></div>
<div class="a cc" style="left:210.9px;top:383px"><i>1</i><i>9</i><i>9</i><i>6</i><i>-</i><i>0</i><i>7</i><i>-</i><i>1</i><i>7</i><i class=w>T</i><i>0</i><i>0</i><i>:</i><i>0</i><i>0</i><i>:</i><i>0</i><i>0</i><i class=w>Z</i></div>
<div class="a cc" style="left:29.9px;top:396px;width:47.7px;overflow:hidden"><i>1</i><i>0</i><i>2</i><i>5</i><i>9</i></div>
<div class="a cc" style="left:78.6px;top:396px;width:65.3px;overflow:hidden"><i class=w>C</i><i class=w>E</i><i class=w>N</i><i class=w>T</i><i class=w>C</i></div>
<div class="a cc" style="left:144.9px;top:396px;width:65.0px;overflow:hidden"><i>4</i></div>
<div class="a cc" style="left:210.9px;top:396px"><i>1</i><i>9</i><i>9</i><i>6</i><i>-</i><i>0</i><i>7</i><i>-</i><i>1</i><i>8</i><i class=w>T</i><i>0</i><i>0</i><i>:</i><i>0</i><i>0</i><i>:</i><i>0</i><i>0</i><i class=w>Z</i></div>
<div class="a cc" style="left:29.9px;top:410px;width:47.7px;overflow:hidden"><i>1</i><i>0</i><i>2</i><i>6</i><i>0</i></div>
<div class="a cc" style="left:78.6px;top:410px;width:65.3px;overflow:hidden"><i class=w>O</i><i class=w>T</i><i class=w>T</i><i class=w>I</i><i class=w>K</i></div>
<div class="a cc" style="left:144.9px;top:410px;width:65.0px;overflow:hidden"><i>4</i></div>
<div class="a cc" style="left:210.9px;top:410px"><i>1</i><i>9</i><i>9</i><i>6</i><i>-</i><i>0</i><i>7</i><i>-</i><i>1</i><i>9</i><i class=w>T</i><i>0</i><i>0</i><i>:</i><i>0</i><i>0</i><i>:</i><i>0</i><i>0</i><i class=w>Z</i></div>
<div class="a cc" style="left:29.9px;top:423px;width:47.7px;overflow:hidden"><i>1</i><i>0</i><i>2</i><i>6</i><i>1</i></div>
<div class="a cc" style="left:78.6px;top:423px;width:65.3px;overflow:hidden"><i class=w>Q</i><i class=w>U</i><i class=w>E</i><i class=w>D</i><i class=w>E</i></div>
<div class="a cc" style="left:144.9px;top:423px;width:65.0px;overflow:hidden"><i>4</i></div>
<div class="a cc" style="left:210.9px;top:423px"><i>1</i><i>9</i><i>9</i><i>6</i><i>-</i><i>0</i><i>7</i><i>-</i><i>1</i><i>9</i><i class=w>T</i><i>0</i><i>0</i><i>:</i><i>0</i><i>0</i><i>:</i><i>0</i><i>0</i><i class=w>Z</i></div>
<div class="a cc" style="left:29.9px;top:437px;width:47.7px;overflow:hidden"><i>1</i><i>0</i><i>2</i><i>6</i><i>2</i></div>
<div class="a cc" style="left:78.6px;top:437px;width:65.3px;overflow:hidden"><i class=w>R</i><i class=w>A</i><i class=w>T</i><i class=w>T</i><i class=w>C</i></div>
<div class="a cc" style="left:144.9px;top:437px;width:65.0px;overflow:hidden"><i>8</i></div>
<div class="a cc" style="left:210.9px;top:437px"><i>1</i><i>9</i><i>9</i><i>6</i><i>-</i><i>0</i><i>7</i><i>-</i><i>2</i><i>2</i><i class=w>T</i><i>0</i><i>0</i><i>:</i><i>0</i><i>0</i><i>:</i><i>0</i><i>0</i><i class=w>Z</i></div>
<div class="a cc" style="left:29.9px;top:451px;width:47.7px;overflow:hidden"><i>1</i><i>0</i><i>2</i><i>6</i><i>3</i></div>
<div class="a cc" style="left:78.6px;top:451px;width:65.3px;overflow:hidden"><i class=w>E</i><i class=w>R</i><i class=w>N</i><i class=w>S</i><i class=w>H</i></div>
<div class="a cc" style="left:144.9px;top:451px;width:65.0px;overflow:hidden"><i>9</i></div>
<div class="a cc" style="left:210.9px;top:451px"><i>1</i><i>9</i><i>9</i><i>6</i><i>-</i><i>0</i><i>7</i><i>-</i><i>2</i><i>3</i><i class=w>T</i><i>0</i><i>0</i><i>:</i><i>0</i><i>0</i><i>:</i><i>0</i><i>0</i><i class=w>Z</i></div>
<div class="a cc" style="left:29.9px;top:464px;width:47.7px;overflow:hidden"><i>1</i><i>0</i><i>2</i><i>6</i><i>4</i></div>
<div class="a cc" style="left:78.6px;top:464px;width:65.3px;overflow:hidden"><i class=w>F</i><i class=w>O</i><i class=w>L</i><i class=w>K</i><i class=w>O</i></div>
<div class="a cc" style="left:144.9px;top:464px;width:65.0px;overflow:hidden"><i>6</i></div>
<div class="a cc" style="left:210.9px;top:464px"><i>1</i><i>9</i><i>9</i><i>6</i><i>-</i><i>0</i><i>7</i><i>-</i><i>2</i><i>4</i><i class=w>T</i><i>0</i><i>0</i><i>:</i><i>0</i><i>0</i><i>:</i><i>0</i><i>0</i><i class=w>Z</i></div>
<div class="a cc" style="left:29.9px;top:478px;width:47.7px;overflow:hidden"><i>1</i><i>0</i><i>2</i><i>6</i><i>5</i></div>
<div class="a cc" style="left:78.6px;top:478px;width:65.3px;overflow:hidden"><i class=w>B</i><i class=w>L</i><i class=w>O</i><i class=w>N</i><i class=w>P</i></div>
<div class="a cc" style="left:144.9px;top:478px;width:65.0px;overflow:hidden"><i>2</i></div>
<div class="a cc" style="left:210.9px;top:478px"><i>1</i><i>9</i><i>9</i><i>6</i><i>-</i><i>0</i><i>7</i><i>-</i><i>2</i><i>5</i><i class=w>T</i><i>0</i><i>0</i><i>:</i><i>0</i><i>0</i><i>:</i><i>0</i><i>0</i><i class=w>Z</i></div>
<div class="a cc" style="left:29.9px;top:491px;width:47.7px;overflow:hidden"><i>1</i><i>0</i><i>2</i><i>6</i><i>6</i></div>
<div class="a cc" style="left:78.6px;top:491px;width:65.3px;overflow:hidden"><i class=w>W</i><i class=w>A</i><i class=w>R</i><i class=w>T</i><i class=w>H</i></div>
<div class="a cc" style="left:144.9px;top:491px;width:65.0px;overflow:hidden"><i>3</i></div>
<div class="a cc" style="left:210.9px;top:491px"><i>1</i><i>9</i><i>9</i><i>6</i><i>-</i><i>0</i><i>7</i><i>-</i><i>2</i><i>6</i><i class=w>T</i><i>0</i><i>0</i><i>:</i><i>0</i><i>0</i><i>:</i><i>0</i><i>0</i><i class=w>Z</i></div>
<div class="a cc" style="left:29.9px;top:505px;width:47.7px;overflow:hidden"><i>1</i><i>0</i><i>2</i><i>6</i><i>7</i></div>
<div class="a cc" style="left:78.6px;top:505px;width:65.3px;overflow:hidden"><i class=w>F</i><i class=w>R</i><i class=w>A</i><i class=w>N</i><i class=w>K</i></div>
<div class="a cc" style="left:144.9px;top:505px;width:65.0px;overflow:hidden"><i>4</i></div>
<div class="a cc" style="left:210.9px;top:505px"><i>1</i><i>9</i><i>9</i><i>6</i><i>-</i><i>0</i><i>7</i><i>-</i><i>2</i><i>9</i><i class=w>T</i><i>0</i><i>0</i><i>:</i><i>0</i><i>0</i><i>:</i><i>0</i><i>0</i><i class=w>Z</i></div>
<div class="a cc" style="left:29.9px;top:519px;width:47.7px;overflow:hidden"><i>1</i><i>0</i><i>2</i><i>6</i><i>8</i></div>
<div class="a cc" style="left:78.6px;top:519px;width:65.3px;overflow:hidden"><i class=w>G</i><i class=w>R</i><i class=w>O</i><i class=w>S</i><i class=w>R</i></div>
<div class="a cc" style="left:144.9px;top:519px;width:65.0px;overflow:hidden"><i>8</i></div>
<div class="a cc" style="left:210.9px;top:519px"><i>1</i><i>9</i><i>9</i><i>6</i><i>-</i><i>0</i><i>7</i><i>-</i><i>3</i><i>0</i><i class=w>T</i><i>0</i><i>0</i><i>:</i><i>0</i><i>0</i><i>:</i><i>0</i><i>0</i><i class=w>Z</i></div>
<div class="a cc" style="left:29.9px;top:532px;width:47.7px;overflow:hidden"><i>1</i><i>0</i><i>2</i><i>6</i><i>9</i></div>
<div class="a cc" style="left:78.6px;top:532px;width:65.3px;overflow:hidden"><i class=w>W</i><i class=w>H</i><i class=w>I</i><i class=w>T</i><i class=w>C</i></div>
<div class="a cc" style="left:144.9px;top:532px;width:65.0px;overflow:hidden"><i>5</i></div>
<div class="a cc" style="left:210.9px;top:532px"><i>1</i><i>9</i><i>9</i><i>6</i><i>-</i><i>0</i><i>7</i><i>-</i><i>3</i><i>1</i><i class=w>T</i><i>0</i><i>0</i><i>:</i><i>0</i><i>0</i><i>:</i><i>0</i><i>0</i><i class=w>Z</i></div>
<div class="a cc" style="left:29.9px;top:546px;width:47.7px;overflow:hidden"><i>1</i><i>0</i><i>2</i><i>7</i><i>0</i></div>
<div class="a cc" style="left:78.6px;top:546px;width:65.3px;overflow:hidden"><i class=w>W</i><i class=w>A</i><i class=w>R</i><i class=w>T</i><i class=w>H</i></div>
<div class="a cc" style="left:144.9px;top:546px;width:65.0px;overflow:hidden"><i>1</i></div>
<div class="a cc" style="left:210.9px;top:546px"><i>1</i><i>9</i><i>9</i><i>6</i><i>-</i><i>0</i><i>8</i><i>-</i><i>0</i><i>1</i><i class=w>T</i><i>0</i><i>0</i><i>:</i><i>0</i><i>0</i><i>:</i><i>0</i><i>0</i><i class=w>Z</i></div>
<div class="a cc" style="left:29.9px;top:559px;width:47.7px;overflow:hidden"><i>1</i><i>0</i><i>2</i><i>7</i><i>1</i></div>
<div class="a cc" style="left:78.6px;top:559px;width:65.3px;overflow:hidden"><i class=w>S</i><i class=w>P</i><i class=w>L</i><i class=w>I</i><i class=w>R</i></div>
<div class="a cc" style="left:144.9px;top:559px;width:65.0px;overflow:hidden"><i>6</i></div>
<div class="a cc" style="left:210.9px;top:559px"><i>1</i><i>9</i><i>9</i><i>6</i><i>-</i><i>0</i><i>8</i><i>-</i><i>0</i><i>1</i><i class=w>T</i><i>0</i><i>0</i><i>:</i><i>0</i><i>0</i><i>:</i><i>0</i><i>0</i><i class=w>Z</i></div>
<div class="a cc" style="left:29.9px;top:573px;width:47.7px;overflow:hidden"><i>1</i><i>0</i><i>2</i><i>7</i><i>2</i></div>
<div class="a cc" style="left:78.6px;top:573px;width:65.3px;overflow:hidden"><i class=w>R</i><i class=w>A</i><i class=w>T</i><i class=w>T</i><i class=w>C</i></div>
<div class="a cc" style="left:144.9px;top:573px;width:65.0px;overflow:hidden"><i>6</i></div>
<div class="a cc" style="left:210.9px;top:573px"><i>1</i><i>9</i><i>9</i><i>6</i><i>-</i><i>0</i><i>8</i><i>-</i><i>0</i><i>2</i><i class=w>T</i><i>0</i><i>0</i><i>:</i><i>0</i><i>0</i><i>:</i><i>0</i><i>0</i><i class=w>Z</i></div>
<div class="a cc" style="left:29.9px;top:587px;width:47.7px;overflow:hidden"><i>1</i><i>0</i><i>2</i><i>7</i><i>3</i></div>
<div class="a cc" style="left:78.6px;top:587px;width:65.3px;overflow:hidden"><i class=w>Q</i><i class=w>U</i><i class=w>I</i><i class=w>C</i><i class=w>K</i></div>
<div class="a cc" style="left:144.9px;top:587px;width:65.0px;overflow:hidden"><i>3</i></div>
<div class="a cc" style="left:210.9px;top:587px"><i>1</i><i>9</i><i>9</i><i>6</i><i>-</i><i>0</i><i>8</i><i>-</i><i>0</i><i>5</i><i class=w>T</i><i>0</i><i>0</i><i>:</i><i>0</i><i>0</i><i>:</i><i>0</i><i>0</i><i class=w>Z</i></div>
<div class="a cc" style="left:29.9px;top:600px;width:47.7px;overflow:hidden"><i>1</i><i>0</i><i>2</i><i>7</i><i>4</i></div>
<div class="a cc" style="left:78.6px;top:600px;width:65.3px;overflow:hidden"><i class=w>V</i><i class=w>I</i><i class=w>N</i><i class=w>E</i><i class=w>T</i></div>
<div class="a cc" style="left:144.9px;top:600px;width:65.0px;overflow:hidden"><i>6</i></div>
<div class="a cc" style="left:210.9px;top:600px"><i>1</i><i>9</i><i>9</i><i>6</i><i>-</i><i>0</i><i>8</i><i>-</i><i>0</i><i>6</i><i class=w>T</i><i>0</i><i>0</i><i>:</i><i>0</i><i>0</i><i>:</i><i>0</i><i>0</i><i class=w>Z</i></div>
<div class="a" style="left:384px;top:383px;width:56px;height:14px;border:1.5px solid #217346"></div>
<div class="a" style="left:436px;top:393px;width:6px;height:6px;background:#217346;border:1px solid #fff"></div>
<!--/GRID-->
 <!-- formula bar -->
 <div class="a" style="left:3px;top:196px;width:94px;height:18px;background:#fff;border:1px solid #e6e6e6;border-radius:2px"></div>
 <div class="a" style="left:7px;top:199px;font-size:9.4px;color:#333">F12</div>
 <svg class="a" style="left:87px;top:203px" width="7" height="5"><path d="M0.8 0.8L3.5 3.6L6.2 0.8" stroke="#444" stroke-width="1" fill="none"/></svg>
 <div class="a" style="left:102px;top:196px;width:67px;height:18px;background:#fff;border:1px solid #e6e6e6;border-radius:2px"></div>
 <svg class="a" style="left:108px;top:199px" width="12" height="12"><path d="M1 1L11 11M11 1L1 11" stroke="#a8a8a8" stroke-width="1"/></svg>
 <svg class="a" style="left:129px;top:199px" width="14" height="12"><path d="M1 6.5L5 10.5L13 1.5" stroke="#b5b5b5" stroke-width="1" fill="none"/></svg>
 <div class="a" style="left:154px;top:198px;font-size:10.5px;font-style:italic;font-family:'Liberation Serif',serif;color:#333">f<span style="font-size:8px">x</span></div>
 <div class="a" style="left:172px;top:196px;width:904px;height:18px;background:#fff;border:1px solid #e6e6e6;border-radius:2px"></div>
 <svg class="a" style="left:1066px;top:202px" width="10" height="6"><path d="M1 1L5 5L9 1" stroke="#333" stroke-width="1" fill="none"/></svg>
 <!-- scrollbars -->
 <div class="a" style="left:613px;top:233px;width:11px;height:384px;background:#e6e6e6"></div>
 <div class="a" style="left:613px;top:234px;width:11px;height:13px;background:#fff;border:1px solid #dadada"></div>
 <svg class="a" style="left:615px;top:238px" width="7" height="5"><path d="M0.5 4L3.5 0.5L6.5 4Z" fill="#555"/></svg>
 <div class="a" style="left:613px;top:246px;width:11px;height:51px;background:#fff;border:1px solid #dadada"></div>
 <div class="a" style="left:613px;top:604px;width:11px;height:13px;background:#fff;border:1px solid #dadada"></div>
 <svg class="a" style="left:615px;top:609px" width="7" height="5"><path d="M0.5 0.5L3.5 4L6.5 0.5Z" fill="#555"/></svg>
 <div class="a" style="left:28px;top:616px;width:585px;height:11px;background:#e6e6e6"></div>
 <div class="a" style="left:28px;top:616px;width:13px;height:11px;background:#fff;border:1px solid #dadada"></div>
 <svg class="a" style="left:32px;top:618px" width="5" height="7"><path d="M4 0.5L0.5 3.5L4 6.5Z" fill="#555"/></svg>
 <div class="a" style="left:41px;top:616px;width:98px;height:11px;background:#fff;border:1px solid #dadada"></div>
 <div class="a" style="left:600px;top:616px;width:13px;height:12px;background:#fff;border:1px solid #dadada"></div>
 <svg class="a" style="left:604px;top:618px" width="5" height="7"><path d="M0.5 0.5L4 3.5L0.5 6.5Z" fill="#555"/></svg>
 <!-- sheet tabs -->
 <div class="a" style="left:0;top:627px;width:625px;height:25px;background:#f4f4f4"></div>
 <div class="a" style="left:0;top:616px;width:28px;height:11px;background:#f4f4f4"></div>
 <svg class="a" style="left:9px;top:634px" width="6" height="10"><path d="M5 1L1 5L5 9" stroke="#b5b5b5" stroke-width="1" fill="none"/></svg>
 <svg class="a" style="left:34px;top:634px" width="6" height="10"><path d="M1 1L5 5L1 9" stroke="#b5b5b5" stroke-width="1" fill="none"/></svg>
 <svg class="a" style="left:56px;top:634px" width="11" height="10"><path d="M0.5 1.5H10.5M0.5 5H10.5M0.5 8.5H10.5" stroke="#444" stroke-width="1.1"/></svg>
 <div class="a" style="left:81px;top:633px;font-size:10.5px;font-weight:bold;letter-spacing:-0.3px;color:#484848">Sheet1</div>
 <div class="a" style="left:80px;top:649px;width:34px;height:2px;background:#217346"></div>
 <svg class="a" style="left:127px;top:634px" width="10" height="10"><path d="M5 0.5V9.5M0.5 5H9.5" stroke="#444" stroke-width="1.1"/></svg>
 <!-- status bar -->
 <div class="a" style="left:0;top:652px;width:1080px;height:17px;background:#fff"></div>
 <div class="a" style="left:0;top:651px;width:625px;height:1px;background:#e3e3e3"></div>
 <div class="a sb" style="left:11px;top:656px">Calculation Mode: Automatic</div>
 <div class="a sb" style="left:141px;top:656px">Workbook Statistics</div>
 <svg class="a" style="left:837px;top:660px" width="7" height="5"><path d="M0.8 0.8L3.5 3.6L6.2 0.8" stroke="#444" stroke-width="1" fill="none"/></svg>
 <div class="a sb" style="left:875px;top:656px">Give Feedback to Microsoft</div>
 <svg class="a" style="left:1015px;top:658px" width="10" height="8"><path d="M0.5 4H9.5" stroke="#444" stroke-width="1"/></svg>
 <div class="a sb" style="left:1032px;top:656px;letter-spacing:-0.3px">100%</div>
 <svg class="a" style="left:1057px;top:657px" width="10" height="10"><path d="M5 0.5V9.5M0.5 5H9.5" stroke="#444" stroke-width="1"/></svg>

<!--CODE-->
 <!-- code editor panel -->
 <div class="a" style="left:624px;top:216px;width:456px;height:436px;background:#eae9e8;border-left:1px solid #dcdcdc"></div>
 <div class="a" style="left:637px;top:230px;font-size:11.6px;font-weight:bold;letter-spacing:-0.15px;color:#252423">Code Editor</div>
 <svg class="a" style="left:1056px;top:231px" width="9" height="9"><path d="M1 1L8 8M8 1L1 8" stroke="#555" stroke-width="1"/></svg>
 <svg class="a" style="left:640px;top:263px" width="13" height="11" viewBox="0 0 13 11"><path d="M12 5.5H1.5M5.5 1.5L1.5 5.5L5.5 9.5" stroke="#4a8c62" stroke-width="1.1" fill="none"/></svg>
 <div class="a" style="left:659px;top:263px;font-size:10.6px;letter-spacing:-0.1px;color:#3b3a39">Script details</div>
 <svg class="a" style="left:643px;top:291px" width="11" height="13" viewBox="0 0 11 13"><path d="M1.5 1.2L9.8 6.5L1.5 11.8Z" stroke="#3f9a5a" stroke-width="1" fill="none" stroke-linejoin="round"/></svg>
 <div class="a" style="left:661px;top:291px;font-size:10.8px;color:#3b3a39">Run</div>
 <svg class="a" style="left:690px;top:292px" width="14" height="11" viewBox="0 0 14 11"><path d="M4 9.5H3.2A2.7 2.7 0 0 1 3 4.1A3.8 3.8 0 0 1 10.4 3.6A2.9 2.9 0 0 1 11 9.5H9.5" stroke="#bdbdbd" stroke-width="1" fill="none"/><path d="M5 8L6.6 9.6L9 7" stroke="#8fc59f" stroke-width="1" fill="none"/></svg>
 <div class="a" style="left:709px;top:292px;font-size:9px;letter-spacing:-0.1px;color:#b3b0ad">Save script</div>
 <svg class="a" style="left:1046px;top:295px" width="13" height="3"><rect x="0.5" y="0.3" width="2.4" height="2.4" fill="#1a1a1a"/><rect x="5" y="0.3" width="2.4" height="2.4" fill="#1a1a1a"/><rect x="9.5" y="0.3" width="2.4" height="2.4" fill="#1a1a1a"/></svg>
 <svg class="a" style="left:641px;top:315px" width="14" height="15"><use href="#scr"/></svg>
<svg class="a" style="left:659.5px;top:317.5px" width="55" height="9" viewBox="0 0 55.0 9.5"><path d="M1.8 0.8V8.2M0.6 2.5H3.7M0.6 5.5H3.7M4.3 0.8H8.6M4.3 3.3H8.6M4.3 5.0H8.6M4.3 8.2H8.6M4.5 0.8V8.5M8.2 0.8V8.0M10.8 0.8V8.2M9.6 2.5H12.8M9.6 5.5H12.8M13.4 0.8H17.6M13.4 3.0H17.6M13.4 4.9H17.6M13.6 0.8V8.5M17.2 0.8V8.0M19.2 0.8H25.9M19.6 3.4H25.7M18.7 6.2H26.5M22.6 0.3V8.5M22.6 4.2L18.6 8.5M22.6 4.2L26.6 8.5M28.1 0.8H34.7M28.0 3.1H35.2M27.7 5.2H34.6M31.6 0.3V8.5M31.6 4.2L27.6 8.5M31.6 4.2L35.6 8.5M37.8 0.8V8.2M36.6 2.5H39.7M36.6 5.5H39.7M40.3 0.8H44.6M40.3 3.0H44.6M40.3 5.1H44.6M40.5 0.8V8.5M44.2 0.8V8.0M46.8 0.8V8.2M45.6 2.5H47.9M45.6 5.5H47.9M48.5 0.8H53.6M48.5 3.3H53.6M48.5 5.3H53.6M48.7 0.8V8.5M53.2 0.8V8.0" stroke="#222" stroke-width="1.2" fill="none"/></svg>
 <div class="a" style="left:625px;top:335px;width:453px;height:306px;background:#fff"></div>
 <div class="a" style="left:1069px;top:335px;width:1px;height:306px;background:#e8e8e8"></div>
<div class="a ln" style="top:336.20px">1</div>
<div class="a cd" style="top:336.20px"><span class="k">async</span> <span class="k">function</span> main(workbook: <span class="t">ExcelScript</span>.<span class="t">Workbook</span>) {</div>
<div class="a ln" style="top:348.25px">2</div>
<div class="a cd" style="top:348.25px">    <span class="k">const</span> sh = workbook.getActiveWorksheet();</div>
<div class="a ln" style="top:360.30px">3</div>
<div class="a ln" style="top:372.35px">4</div>
<div class="a cd" style="top:372.35px">    sh.getUsedRange().clear();</div>
<div class="a ln" style="top:384.40px">5</div>
<div class="a cd" style="top:384.40px">    sh.getRange(<span class="s">&quot;A1:D1&quot;</span>).setValues([[<span class="s">&quot;OrderID&quot;</span>,<span class="s">&quot;CustomerID&quot;</span>,<span class="s">&quot;EmployeeID&quot;</span>,</div>
<div class="a cd" style="top:396.45px">      <span class="s">&quot;OrderDate&quot;</span>]]);</div>
<div class="a ln" style="top:408.50px">6</div>
<div class="a cd" style="top:408.50px">    sh.getRange(<span class="s">&quot;A1:D1&quot;</span>).getFormat().getFont().setBold(<span class="k">true</span>);</div>
<div class="a ln" style="top:420.55px">7</div>
<div class="a ln" style="top:432.60px">8</div>
<div class="a cd" style="top:432.60px">    <span class="k">const</span> response = <span class="k">await</span> fetch(<span class="s">&#x27;</span><span class="u">https://services.odata.org/V4/Northwind/</span></div>
<div class="a cd" style="top:444.65px">      <span class="u">Northwind.svc/Orders</span><span class="s">&#x27;</span>);</div>
<div class="a ln" style="top:456.70px">9</div>
<div class="a cd" style="top:456.70px">    <span class="k">const</span> data: (<span class="k">string</span> <span class="k">|</span> <span class="k">number</span> <span class="k">|</span> <span class="k">boolean</span> )[][] = <span class="k">await</span> response.json().then</div>
<div class="a cd" style="top:468.75px">      (x=&gt;x.value)</div>
<div class="a ln" style="top:480.80px">10</div>
<div class="a cd" style="top:480.80px">      .then(x=&gt;x.map(<span class="h">y=</span>&gt;[y.<span class="t">OrderID</span>,y.<span class="t">CustomerID</span>,y.<span class="t">EmployeeID</span>,y.<span class="t">OrderDate</span>]))</div>
<div class="a ln" style="top:492.85px">11</div>
<div class="a ln" style="top:504.90px">12</div>
<div class="a cd" style="top:504.90px">    sh.getRange(<span class="s">&quot;A2&quot;</span>).getResizedRange(data.length-<span class="n">1</span>,data[<span class="n">0</span>].length-<span class="n">1</span>).setValues</div>
<div class="a cd" style="top:516.95px">      (data);</div>
<div class="a ln" style="top:529.00px">13</div>
<div class="a cd" style="top:529.00px">    <span class="k">const</span> format = sh.getUsedRange().getFormat();</div>
<div class="a ln" style="top:541.05px">14</div>
<div class="a ln" style="top:553.10px">15</div>
<div class="a cd" style="top:553.10px">    format.autofitColumns();</div>
<div class="a ln" style="top:565.15px">16</div>
<div class="a cd" style="top:565.15px">    format.setHorizontalAlignment(<span class="t">ExcelScript</span>.<span class="t">HorizontalAlignment</span>.left);</div>
<div class="a ln" style="top:577.20px">17</div>
<div class="a cd" style="top:577.20px">}</div>
<div class="a" style="left:664.0px;top:348.2px;width:1px;height:229.0px;background:#d3d3d3"></div>
<div class="a" style="left:674.0px;top:348.2px;width:1px;height:229.0px;background:#d3d3d3"></div>
<div class="a" style="left:684.0px;top:480.8px;width:1px;height:24.1px;background:#d3d3d3"></div>
<!--/CODE-->
</div>
<div id="frame"></div>
</body></html>
